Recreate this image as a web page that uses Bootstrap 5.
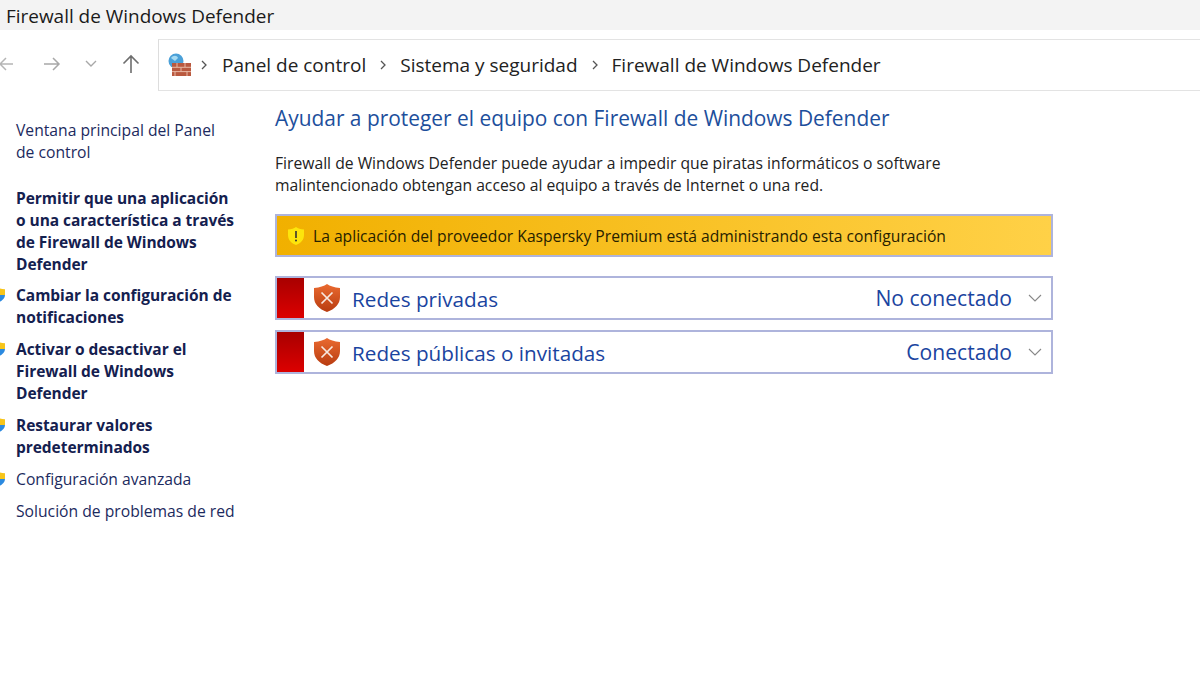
<!doctype html>
<html lang="es"><head><meta charset="utf-8"><title>Firewall de Windows Defender</title>
<link href="https://cdn.jsdelivr.net/npm/bootstrap@5.3.0/dist/css/bootstrap.min.css" rel="stylesheet">
<style>
html,body{height:673px;overflow:hidden;background:#fff}
body{font-family:"Open Sans","Noto Sans",sans-serif;color:#1a1a1a}
.titlebar{height:30px;background:#f3f3f3;font-size:18.95px;line-height:33px;padding-left:6px;white-space:nowrap}
.navrow{height:61px}
.navbtns{width:158px;height:51px;margin-top:9px}
.navbtns svg{position:absolute}
.addr{margin-top:9px;height:52px;flex:1;border:1px solid #e3e3e3;border-right:0;border-left-color:#ddd;font-size:19px;color:#222;padding-left:9px;white-space:nowrap}
.addr .crumb{margin-left:13px;margin-right:13px;padding-top:1px}
.addr .crumb:first-of-type{margin-left:14px}
.sidecol{width:275px;flex:none;padding:28px 0 0 16px;font-size:15.7px;line-height:22px;white-space:nowrap}
.sidelink{color:#1c2a5e;position:relative;margin-bottom:10px}
.sidelink.strong{font-weight:700;color:#14204f;font-size:15.5px;letter-spacing:-.05px}
.sidelink.tight{margin-bottom:9px}
.shieldmini{position:absolute;left:-27px;top:3px}
.maincol{width:778px;flex:none;padding-top:13px}
.pagehead{font-size:20.9px;line-height:28px;color:#1d4f9c;margin:0 0 20px;font-weight:400;white-space:nowrap}
.intro{font-size:15.7px;line-height:22px;color:#222;margin-bottom:18px;white-space:nowrap}
.warnbar{height:43px;border:2px solid #aeb4dc;background:linear-gradient(90deg,#f1b000,#ffd147);font-size:15.65px;color:#272100;padding-left:10px;margin-bottom:19px;white-space:nowrap}
.warntext{padding-top:2px}
.netrow{height:44px;border:2px solid #aeb4dc;margin-bottom:10px;background:#fff;color:#1a44a0;font-size:20.7px;white-space:nowrap}
.redblock{width:27px;align-self:stretch;background:linear-gradient(180deg,#a80000,#dc0000)}
.netshield{margin:0 11px 0 9px}
.netlabel{padding-top:3px}
.netstate{margin-left:auto;margin-right:16px;font-size:21.1px}
.chev{margin-right:9px}
</style></head><body>
<svg width="0" height="0" class="position-absolute"><defs>
<linearGradient id="sg" x1="0" y1="0" x2="0" y2="1"><stop offset="0" stop-color="#ea6a30"/><stop offset="1" stop-color="#b83c10"/></linearGradient>
<symbol id="uac" viewBox="0 0 16 16"><path d="M8 0c2 1.300 4.500 2 8 2.200V8H8z" fill="#f7c51a"/><path d="M8 0C6 1.300 3.500 2 0 2.200V8h8z" fill="#2b7fd6"/><path d="M16 8c0 3.500-3.500 6.500-8 8V8z" fill="#2b8ae0"/><path d="M0 8c0 3.500 3.500 6.500 8 8V8z" fill="#f7c51a"/></symbol>
<symbol id="redshield" viewBox="0 0 28 30"><path d="M14 1c3 2 7 3.500 13 4v9c0 7-5 12-13 15C6 26 1 21 1 14V5c6-.5 10-2 13-4z" fill="url(#sg)"/><path d="M8.500 9.500 19.500 20.500M19.500 9.500 8.500 20.500" stroke="#f7e8df" stroke-width="1.700"/></symbol>
</defs></svg>
<div class="titlebar">Firewall de Windows Defender</div>
<div class="navrow d-flex">
  <div class="navbtns position-relative">
    <svg style="left:-2px;top:16px" width="18" height="18" viewBox="0 0 18 18" fill="none" stroke="#b5b5b5" stroke-width="1.5"><path d="M15 9H2M8 3 2 9l6 6"/></svg>
    <svg style="left:43px;top:16px" width="18" height="18" viewBox="0 0 18 18" fill="none" stroke="#a8a8a8" stroke-width="1.5"><path d="M1 9h15M10 3l6 6-6 6"/></svg>
    <svg style="left:84px;top:20px" width="14" height="10" viewBox="0 0 14 10" fill="none" stroke="#a8a8a8" stroke-width="1.4"><path d="M2 2l5 5 5-5"/></svg>
    <svg style="left:121px;top:15px" width="20" height="20" viewBox="0 0 20 20" fill="none" stroke="#6e6e6e" stroke-width="1.6"><path d="M10 19V2M2.500 9.500 10 2l7.500 7.500"/></svg>
  </div>
  <div class="addr d-flex align-items-center">
    <svg width="24" height="24" viewBox="0 0 24 24"><circle cx="8" cy="8" r="7.500" fill="#4aa0d8"/><path d="M3 5c2-3 6-3 7 0l-3 3z" fill="#a5daf2"/><rect x="4" y="10" width="19" height="13" fill="#b9593f"/><path d="M4 14.300h19M4 18.600h19M9 10v4M17 10v4M13 14.300v4.300M7 18.600V23M19 18.600V23" stroke="#e8b9a5" stroke-width="1"/></svg>
    <svg class="ms-2" width="8" height="10" viewBox="0 0 8 10" fill="none" stroke="#555" stroke-width="1.300"><path d="M2 1l4 4-4 4"/></svg>
    <span class="crumb">Panel de control</span>
    <svg width="8" height="10" viewBox="0 0 8 10" fill="none" stroke="#555" stroke-width="1.300"><path d="M2 1l4 4-4 4"/></svg>
    <span class="crumb">Sistema y seguridad</span>
    <svg width="8" height="10" viewBox="0 0 8 10" fill="none" stroke="#555" stroke-width="1.300"><path d="M2 1l4 4-4 4"/></svg>
    <span class="crumb">Firewall de Windows Defender</span>
  </div>
</div>
<div class="d-flex">
  <div class="sidecol">
    <div class="sidelink mb-4">Ventana principal del Panel<br>de control</div>
    <div class="sidelink strong tight">Permitir que una aplicación<br>o una característica a través<br>de Firewall de Windows<br>Defender</div>
    <div class="sidelink strong"><svg class="shieldmini" width="16" height="16"><use href="#uac"/></svg>Cambiar la configuración de<br>notificaciones</div>
    <div class="sidelink strong"><svg class="shieldmini" width="16" height="16"><use href="#uac"/></svg>Activar o desactivar el<br>Firewall de Windows<br>Defender</div>
    <div class="sidelink strong"><svg class="shieldmini" width="16" height="16"><use href="#uac"/></svg>Restaurar valores<br>predeterminados</div>
    <div class="sidelink"><svg class="shieldmini" width="16" height="16"><use href="#uac"/></svg>Configuración avanzada</div>
    <div class="sidelink">Solución de problemas de red</div>
  </div>
  <div class="maincol">
    <h1 class="pagehead">Ayudar a proteger el equipo con Firewall de Windows Defender</h1>
    <p class="intro">Firewall de Windows Defender puede ayudar a impedir que piratas informáticos o software<br>malintencionado obtengan acceso al equipo a través de Internet o una red.</p>
    <div class="warnbar d-flex align-items-center">
      <svg class="me-2" width="18" height="20" viewBox="0 0 18 20"><path d="M9 1c2 1.500 4.500 2.300 8 2.500V9c0 5-3.500 8.500-8 10C4.500 17.500 1 14 1 9V3.500C4.500 3.300 7 2.500 9 1z" fill="#fde50c"/><path d="M9 5v7" stroke="#333" stroke-width="1.600"/><circle cx="9" cy="14.500" r="1" fill="#333"/></svg>
      <span class="warntext">La aplicación del proveedor Kaspersky Premium está administrando esta configuración</span>
    </div>
    <div class="netrow d-flex align-items-center">
      <div class="redblock"></div>
      <svg class="netshield" width="28" height="30"><use href="#redshield"/></svg>
      <span class="netlabel">Redes privadas</span>
      <span class="netstate">No conectado</span>
      <svg class="chev" width="14" height="8" viewBox="0 0 14 8" fill="none" stroke="#888" stroke-width="1.100"><path d="M1 1l6 6 6-6"/></svg>
    </div>
    <div class="netrow d-flex align-items-center">
      <div class="redblock"></div>
      <svg class="netshield" width="28" height="30"><use href="#redshield"/></svg>
      <span class="netlabel">Redes públicas o invitadas</span>
      <span class="netstate">Conectado</span>
      <svg class="chev" width="14" height="8" viewBox="0 0 14 8" fill="none" stroke="#888" stroke-width="1.100"><path d="M1 1l6 6 6-6"/></svg>
    </div>
  </div>
</div>
</body></html>
